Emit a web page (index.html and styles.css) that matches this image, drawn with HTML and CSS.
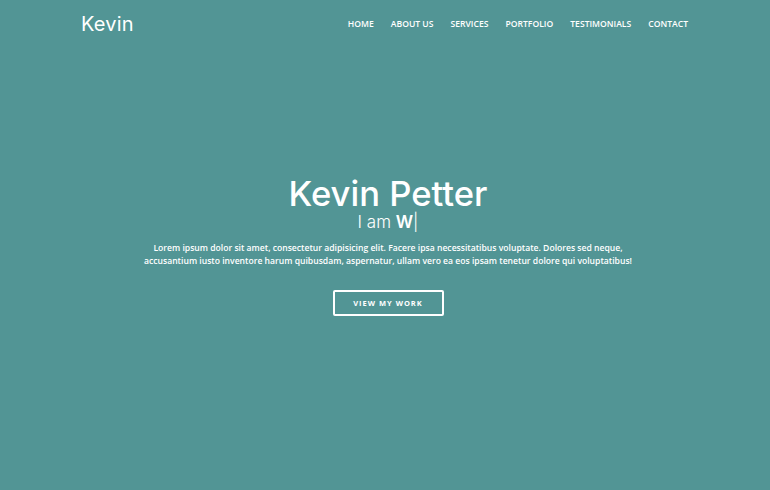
FILE: index.html
```html
<!DOCTYPE html>
<html>
<head>
<meta charset="utf-8">
<link rel="stylesheet" href="styles.css">
</head>
<body>
<div class="page">
  <header class="topbar">
    <div class="logo">Kevin</div>
    <nav class="nav">
      <a>HOME</a>
      <a>ABOUT US</a>
      <a>SERVICES</a>
      <a>PORTFOLIO</a>
      <a>TESTIMONIALS</a>
      <a>CONTACT</a>
    </nav>
  </header>
  <section class="hero">
    <h1 class="name">Kevin Petter</h1>
    <div class="role">I am <b>W</b><span class="cursor">|</span></div>
    <p class="intro">Lorem ipsum dolor sit amet, consectetur adipisicing elit. Facere ipsa necessitatibus voluptate. Dolores sed neque,<br>accusantium iusto inventore harum quibusdam, aspernatur, ullam vero ea eos ipsam tenetur dolore qui voluptatibus!</p>
    <a class="btn">VIEW MY WORK</a>
  </section>
</div>
</body>
</html>
```
FILE: styles.css
```css
* { box-sizing: border-box; margin: 0; padding: 0; }
html, body { width: 770px; height: 490px; overflow: hidden; }
body { background: #529595; color: #fff; font-family: "Open Sans", "Liberation Sans", sans-serif; }
.page { width: 770px; height: 490px; display: flex; flex-direction: column; }
.topbar { display: flex; justify-content: space-between; align-items: center; padding: 12px 82px 0 81px; height: 36px; }
.logo { font-family: "Inter", "Lato", sans-serif; font-size: 20px; font-weight: 400; letter-spacing: 0.2px; }
.nav { display: flex; gap: 17px; }
.nav a { font-size: 8.6px; font-weight: 600; letter-spacing: 0; }
.hero { display: flex; flex-direction: column; align-items: center; text-align: center; padding-top: 138px; padding-left: 6px; }
.name { font-family: "Inter", "Lato", sans-serif; font-size: 34.6px; font-weight: 500; line-height: 38px; letter-spacing: 0; }
.role { font-family: "Inter", "Lato", sans-serif; font-size: 17px; font-weight: 300; line-height: 20px; margin-top: 0; }
.role b { font-weight: 600; }
.cursor { font-weight: 300; }
.intro { font-size: 8.6px; font-weight: 600; line-height: 13px; margin-top: 10px; }
.btn { margin-top: 22px; width: 111px; height: 26px; border: 2px solid #fff; border-radius: 2px; display: flex; align-items: center; justify-content: center; font-size: 7.5px; font-weight: 700; letter-spacing: 1px; }
```
